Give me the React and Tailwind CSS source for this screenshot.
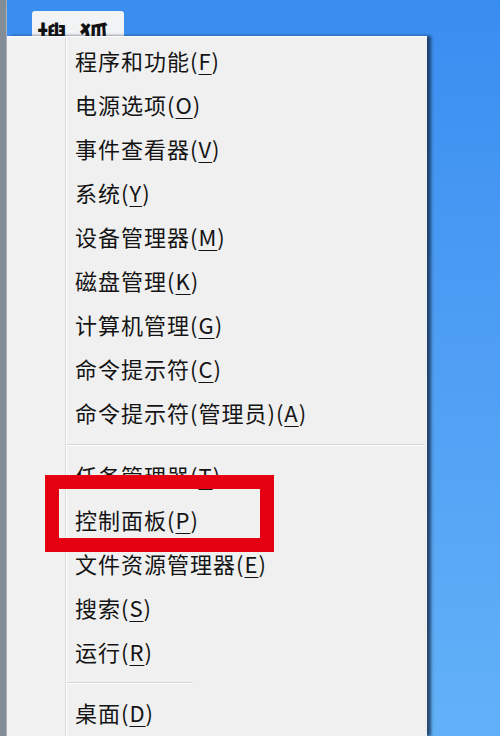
import React from 'react';

const groupOne = [
  ['程序和功能', 'F'],
  ['电源选项', 'O'],
  ['事件查看器', 'V'],
  ['系统', 'Y'],
  ['设备管理器', 'M'],
  ['磁盘管理', 'K'],
  ['计算机管理', 'G'],
  ['命令提示符', 'C'],
  ['命令提示符(管理员)', 'A'],
];

const groupTwo = [
  ['任务管理器', 'T'],
  ['控制面板', 'P'],
  ['文件资源管理器', 'E'],
  ['搜索', 'S'],
  ['运行', 'R'],
];

function MenuItem({ label, hotkey }) {
  return (
    <div className="h-[44px] flex items-center pl-[8px] text-[22px] tracking-[1px] text-[#141414] whitespace-nowrap">
      <span>{label}</span>
      <span>(</span>
      <span className="underline underline-offset-[4px] decoration-1">{hotkey}</span>
      <span>)</span>
    </div>
  );
}

export default function App() {
  return (
    <div
      className="relative w-[500px] h-[736px] overflow-hidden flex bg-gradient-to-b from-[#3a8df0] to-[#62b1f8]"
      style={{ fontFamily: '"Noto Sans CJK SC", "Noto Sans", sans-serif' }}
    >
      {/* window edge on the left */}
      <div className="w-[7px] h-full shrink-0 bg-[#838d97] border-r border-[#a9b2ba]" />

      <div className="flex flex-col flex-1 min-w-0">
        {/* tab peeking above the menu, its label hidden behind the menu */}
        <div className="h-[36px] shrink-0 flex items-end pl-[25px]">
          <div className="w-[92px] h-[25px] bg-[#f2f3f5] rounded-t-[3px] overflow-hidden pl-[5px] pt-[9px]">
            <div className="h-[16px] overflow-hidden">
              <span className="block text-[30px] font-bold leading-[30px] tracking-[12px] text-[#111] whitespace-nowrap">搜狐</span>
            </div>
          </div>
        </div>

        {/* context menu */}
        <div className="w-[420px] flex-1 flex bg-[#f0f0f0] border-t border-white shadow-[4px_0_3px_rgba(20,40,70,0.75)]">
          <div className="w-[59px] shrink-0 bg-[#f2f2f2] border-r border-[#dadada]" />
          <div className="flex-1 border-l border-white pt-[1px]">
            {groupOne.map(([label, key]) => (
              <MenuItem key={label} label={label} hotkey={key} />
            ))}
            <div className="mt-[10px] mb-[7px] h-px bg-[#d4d4d4] border-b border-white box-content mr-[3px]" />
            {groupTwo.map(([label, key]) => (
              <MenuItem key={label} label={label} hotkey={key} />
            ))}
            <div className="mt-[9px] mb-[6px] w-[126px] h-px bg-[#d4d4d4] border-b border-white box-content" />
            <MenuItem label="桌面" hotkey="D" />
          </div>
        </div>
      </div>

      {/* red highlight annotation */}
      <div className="absolute left-[45px] top-[475px] w-[229px] h-[77px] border-[14px] border-[#e50012]" />
    </div>
  );
}
